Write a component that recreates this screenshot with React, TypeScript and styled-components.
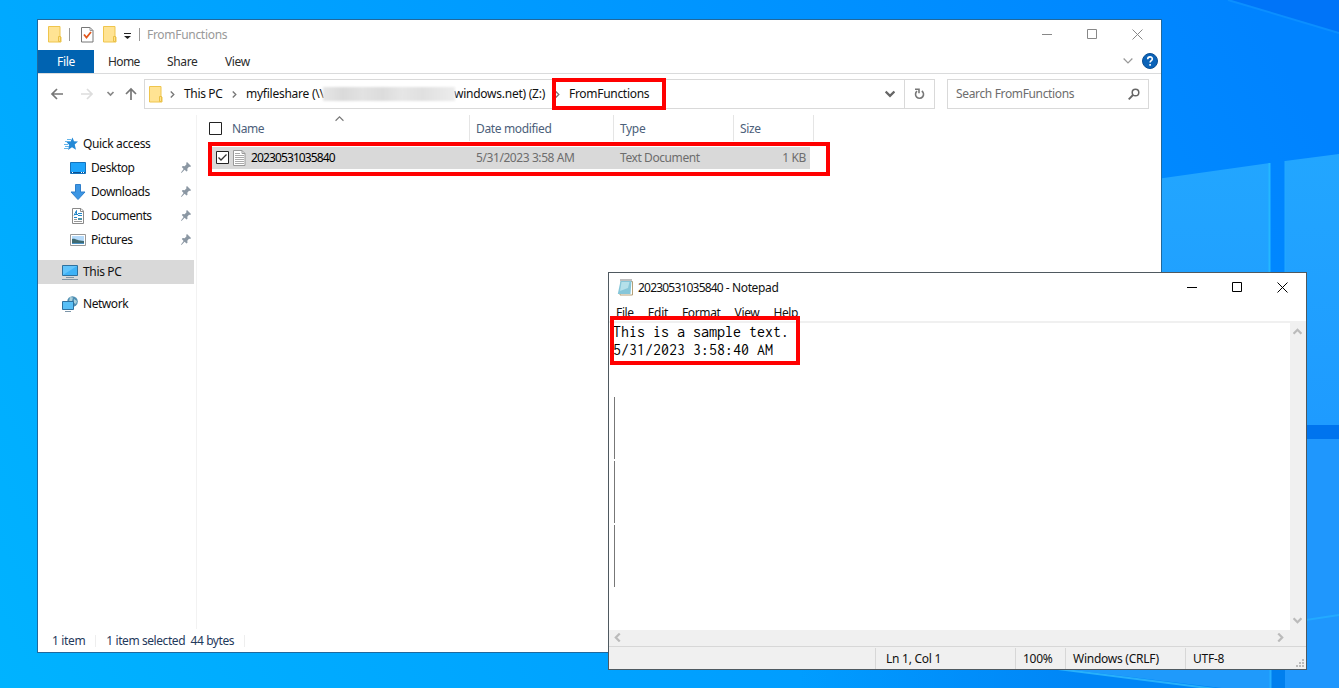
import React from 'react';
import styled, { createGlobalStyle } from 'styled-components';

const Global = createGlobalStyle`
  * { box-sizing: border-box; }
  body { margin: 0; overflow: hidden; }
  svg { display: block; flex: none; }
`;

const Desktop = styled.main`
  position: relative;
  width: 1339px;
  height: 688px;
  overflow: hidden;
  background: #0092ff;
  font: 12px/16px 'Noto Sans', 'Open Sans', sans-serif;
  letter-spacing: -0.35px;
  color: #111;
  white-space: pre;
`;

const Wallpaper = styled.svg`
  position: absolute;
  inset: 0;
`;

const Window = styled.section<{ $x: number; $y: number; $w: number; $h: number; $edge: string }>`
  position: absolute;
  left: ${p => p.$x}px;
  top: ${p => p.$y}px;
  width: ${p => p.$w}px;
  height: ${p => p.$h}px;
  border: 1px solid ${p => p.$edge};
  background: #fff;
  display: flex;
  flex-direction: column;
`;

const Highlight = styled.div<{ $x: number; $y: number; $w: number; $h: number }>`
  position: absolute;
  left: ${p => p.$x}px;
  top: ${p => p.$y}px;
  width: ${p => p.$w}px;
  height: ${p => p.$h}px;
  border: 4px solid #f00;
`;

const Label = styled.span<{ $track?: number; $color?: string }>`
  letter-spacing: ${p => p.$track ?? -0.35}px;
  color: ${p => p.$color ?? 'inherit'};
`;

/* File Explorer */
const TitleBar = styled.header`
  height: 30px;
  display: flex;
  align-items: center;
  padding: 0 0 1px 10px;
`;
const Separator = styled.i<{ $l: number; $r: number }>`
  width: 1px;
  height: 13px;
  margin: 0 ${p => p.$r}px 0 ${p => p.$l}px;
  background: #999;
`;
const QuickCheck = styled.svg`
  margin-right: 9px;
`;
const WindowButtons = styled.div`
  display: flex;
  gap: 35px;
  margin-left: auto;
  padding-right: 18px;
`;
const TabBar = styled.nav`
  height: 24px;
  display: flex;
  align-items: center;
  border-bottom: 1px solid #dadbdc;
  color: #2b2b2b;
`;
const FileTab = styled.span`
  width: 56px;
  height: 23px;
  line-height: 24px;
  text-align: center;
  background: #0063b1;
  color: #fff;
`;
const Tab = styled.span<{ $w: number }>`
  width: ${p => p.$w}px;
  padding-left: 14px;
`;
const HelpArea = styled.div`
  margin-left: auto;
  padding: 0 3px 1px 0;
  display: flex;
  align-items: center;
  gap: 9px;
`;
const NavRow = styled.div`
  height: 41px;
  display: flex;
  align-items: flex-start;
  padding: 5px 12px 0 11px;
`;
const NavButtons = styled.div`
  width: 95px;
  height: 30px;
  display: flex;
  align-items: center;
`;
const AddressBox = styled.div`
  width: 791px;
  height: 30px;
  border: 1px solid #d9d9d9;
  display: flex;
  align-items: center;
  padding-left: 4px;
`;
const Crumb = styled.span<{ $w: number }>`
  width: ${p => p.$w}px;
`;
const Redacted = styled.span`
  width: 132px;
  height: 14px;
  margin-right: -1px;
  background: linear-gradient(90deg, #e6e6e6, #dadada 15%, #e2e2e2 30%, #dcdcdc 45%, #e6e6e6 60%, #e0e0e0 75%, #ececec);
  filter: blur(1px);
`;
const DropArea = styled.span`
  margin-left: auto;
  width: 28px;
  display: flex;
  justify-content: center;
`;
const Refresh = styled.span`
  width: 30px;
  height: 28px;
  border-left: 1px solid #d9d9d9;
  display: flex;
  align-items: center;
  justify-content: center;
`;
const SearchBox = styled.div`
  width: 202px;
  height: 30px;
  margin-left: 12px;
  border: 1px solid #d9d9d9;
  padding: 0 8px;
  display: flex;
  align-items: center;
  justify-content: space-between;
  color: #6d6d6d;
`;
const Body = styled.div`
  height: 514px;
  display: flex;
`;
const Sidebar = styled.aside`
  width: 159px;
  border-right: 1px solid #f2f2f2;
  padding-top: 17px;
`;
const SideItem = styled.div<{ $pad: number; $gap?: number; $active?: boolean }>`
  width: 156px;
  height: 24px;
  margin-top: ${p => p.$gap ?? 0}px;
  padding: 0 3px 0 ${p => p.$pad}px;
  background: ${p => (p.$active ? '#d9d9d9' : 'transparent')};
  display: flex;
  align-items: center;
  gap: 5px;
  & > svg:nth-child(3) { margin: 0 0 1px auto; }
`;
const FileList = styled.div`
  flex: 1;
  padding-left: 11px;
`;
const ColumnHeads = styled.div`
  height: 26px;
  display: flex;
  color: #4c607a;
`;
const Column = styled.div<{ $w: number; $pad: number }>`
  position: relative;
  width: ${p => p.$w}px;
  padding: 1px 0 0 ${p => p.$pad}px;
  border-right: 1px solid #e5e5e5;
  display: flex;
  align-items: center;
  gap: 10px;
`;
const SortMark = styled.span`
  position: absolute;
  left: 127px;
  top: -1px;
`;
const FileRow = styled.div`
  width: 599px;
  height: 22px;
  margin: 6px 0 0 3px;
  padding: 0 4px 1px 5px;
  background: #d9d9d9;
  color: #6d6d6d;
  display: flex;
  align-items: center;
`;
const FileIcon = styled.span`
  padding: 0 5px 0 4px;
`;
const Cell = styled.span<{ $w: number }>`
  width: ${p => p.$w}px;
  letter-spacing: -0.42px;
`;
const SizeCell = styled.span`
  margin-left: auto;
`;
const StatusBar = styled.footer`
  flex: 1;
  display: flex;
  align-items: center;
  padding-left: 14px;
  color: #1f3a5c;
`;
const StatusRule = styled.i<{ $l: number; $r: number }>`
  width: 1px;
  height: 12px;
  margin: 0 ${p => p.$r}px 0 ${p => p.$l}px;
  background: #eee;
`;

/* Notepad */
const NoteTitle = styled.header`
  height: 30px;
  display: flex;
  align-items: center;
  padding: 0 0 1px 8px;
  gap: 5px;
`;
const MenuBar = styled.nav`
  height: 20px;
  display: flex;
  padding: 2px 0 0 7px;
  gap: 14px;
  border-bottom: 2px solid #f0f0f0;
`;
const Editor = styled.div`
  height: 307px;
  display: flex;
`;
const Page = styled.div`
  flex: 1;
  padding: 0 4px;
  font: 16px/18px Inconsolata, Consolas, 'DejaVu Sans Mono', monospace;
  letter-spacing: 0;
  color: #000;
`;
const Line = styled.div`
  height: 18px;
`;
const CaretTrail = styled.div`
  margin: 38px 0 0 1px;
  display: grid;
  gap: 2px;
  & > i { width: 1px; height: 62px; background: #777; }
`;
const VScroll = styled.div`
  width: 16px;
  background: #f0f0f0;
  display: flex;
  flex-direction: column;
  align-items: center;
  justify-content: space-between;
  padding: 4px 1px 5px 0;
`;
const HScroll = styled.div`
  height: 16px;
  background: #f0f0f0;
  display: flex;
  justify-content: space-between;
  align-items: center;
  padding: 0 21px 1px 4px;
`;
const NoteStatus = styled.footer`
  flex: 1;
  border-top: 1px solid #d7d7d7;
  background: #f0f0f0;
  display: flex;
  justify-content: flex-end;
  align-items: center;
`;
const StatusCell = styled.span<{ $w: number; $pad: number }>`
  width: ${p => p.$w}px;
  height: 21px;
  padding-left: ${p => p.$pad}px;
  border-left: 1px solid #d7d7d7;
  line-height: 22px;
  letter-spacing: -0.25px;
`;
const Grip = styled.svg`
  position: absolute;
  right: 2px;
  bottom: 2px;
`;

const Folder = () => (
  <svg width="14" height="17" viewBox="0 0 14 17">
    <path d="M.5.5h11.500v10.500h1v5H.5z" fill="#ffe393" stroke="#efc54d" />
    <path d="M10.500 10.500h2v5h-2z" fill="#ffe08a" stroke="#e9c046" />
  </svg>
);
const Chevron = ({ d = 'right', s = 7, c = '#777', w = 1.5 }: { d?: string; s?: number; c?: string; w?: number }) => {
  const r: Record<string, number> = { right: 0, down: 90, left: 180, up: 270 };
  return (
    <svg width={s} height={s} viewBox="0 0 8 8">
      <path d="M2 0.5L5.5 4 2 7.5" fill="none" stroke={c} strokeWidth={w} transform={`rotate(${r[d]} 4 4)`} />
    </svg>
  );
};
const Pin = () => (
  <svg width="10" height="11" viewBox="0 0 10 11" fill="#8b97a3">
    <path d="M6 0l4 4-.8 1-1.200-.2L6.300 6.700l.2 2-1 .8L3.600 7.700.5 11 0 10.500 2.600 6.900.8 5l.9-1 2 .2 1.800-1.900L5.200 1z" />
  </svg>
);
const Star = () => (
  <svg width="14" height="14" viewBox="0 0 14 14">
    <path d="M8.500.5l1.500 3.800 4 .2-3.300 3 1.300 5.200-4-2.500-4 2.700 1.200-5L2.500 5l4-.5z" fill="#2489d6" />
    <path d="M3 2.500h4M1 4.500h5M0 7.500h4M1 9.500h4M0 11.500h4" stroke="#65b5ea" />
  </svg>
);
const DesktopIcon = () => (
  <svg width="16" height="12" viewBox="0 0 16 12">
    <path d="M.5.5h15v11H.5z" fill="#1ea4fb" stroke="#1573bd" />
    <path d="M1 10.500h14" stroke="#0a4f91" />
    <path d="M2 10.500h1M11 10.500h1M13 10.500h1" stroke="#fff" />
  </svg>
);
const DownloadIcon = () => (
  <svg width="16" height="16" viewBox="0 0 16 16"><path d="M5.500.5h5v7.500h4.500L8 15.500 1 8h4.500z" fill="#3c96e4" stroke="#2f7fcb" /></svg>
);
const DocumentIcon = () => (
  <svg width="16" height="16" viewBox="0 0 16 16">
    <path d="M2.500.5h8.500l2.500 2.500v12.500h-11z" fill="#fff" stroke="#8a8a8a" />
    <path d="M10.500.5v3h3" fill="none" stroke="#8a8a8a" />
    <path d="M4 7.500l2.500-5v4M4 6.500h4M8 5.500h4M4 9.500h3M8 7.500h4" stroke="#2588c9" fill="none" />
    <path d="M4 11.500h3M4 13.500h8" stroke="#999" />
    <path d="M8 10h4v2H8z" fill="#4d93a8" />
  </svg>
);
const PictureIcon = () => (
  <svg width="16" height="12" viewBox="0 0 16 12">
    <path d="M.5.5h15v11H.5z" fill="#fff" stroke="#999" />
    <path d="M2 2h12v8H2z" fill="#b5dafa" />
    <path d="M2 5c3-1 5 2 12 2v2H2z" fill="#3f6a72" />
    <path d="M2 9h12v1H2z" fill="#4c93c6" />
  </svg>
);
const PcIcon = () => (
  <svg width="16" height="15" viewBox="0 0 16 15">
    <path d="M.5.5h15v10H.5z" fill="#62c4fb" stroke="#2e719f" />
    <path d="M1 10L15 1v9z" fill="#3fb2f6" />
    <path d="M4 12.500h8M0 14.500h16" stroke="#8296a5" />
  </svg>
);
const NetworkIcon = () => (
  <svg width="16" height="16" viewBox="0 0 16 16">
    <circle cx="10.500" cy="5.500" r="5.300" fill="#4f8fb3" />
    <path d="M8 1l3 .5-1 3.500-3 1zM12 3l3 2-1 3-2-1z" fill="#a9cfdb" />
    <path d="M.5 5.500h11v8H.5z" fill="#58bff6" stroke="#2e719f" />
    <path d="M3 15.500h6" stroke="#7c95a8" />
  </svg>
);
const TextFile = () => (
  <svg width="13" height="16" viewBox="0 0 13 16">
    <path d="M.5.5H9l3 3v12H.5z" fill="#fff" stroke="#999" />
    <path d="M9 .5v3h3" fill="none" stroke="#999" />
    <path d="M2 5.500h9M2 7.500h9M2 9.500h9M2 11.500h9M2 13.500h9M2 3.500h5" stroke="#aaa" />
  </svg>
);
const NotepadIcon = () => (
  <svg width="16" height="17" viewBox="0 0 16 17">
    <path d="M4 2.500h11.500V16H3z" fill="#fff" stroke="#b3a078" />
    <path d="M3.500 2H14.500l-1 13H.8z" fill="#86c6d9" />
    <path d="M4.500 3h8l-1.500 6-8 3z" fill="#b5e0ea" />
    <path d="M3.500 1h11" stroke="#555" strokeWidth="1.500" strokeDasharray="1 1" />
  </svg>
);
const Check = ({ on }: { on?: boolean }) => (
  <svg width="13" height="13" viewBox="0 0 13 13">
    <path d="M.5.5h12v12H.5z" fill="#fff" stroke="#222" />
    {on && <path d="M2.500 6.500L5 9l5.500-5.500" fill="none" stroke="#333" strokeWidth="1.300" />}
  </svg>
);
const Controls = ({ c }: { c: string }) => (
  <WindowButtons>
    <svg width="10" height="11" viewBox="0 0 10 11"><path d="M0 5.500h10" stroke={c} /></svg>
    <svg width="10" height="11" viewBox="0 0 10 11"><path d="M.5.5h9v9h-9z" fill="none" stroke={c} /></svg>
    <svg width="11" height="11" viewBox="0 0 11 11"><path d="M.5.5l10 10M10.500.5l-10 10" stroke={c} /></svg>
  </WindowButtons>
);

const quickItems = [
  { name: 'Desktop', icon: <DesktopIcon /> },
  { name: 'Downloads', icon: <DownloadIcon /> },
  { name: 'Documents', icon: <DocumentIcon /> },
  { name: 'Pictures', icon: <PictureIcon /> },
];

const Explorer = () => (
  <Window $x={37} $y={19} $w={1125} $h={634} $edge="#21689c">
    <TitleBar>
      <Folder />
      <Separator $l={7} $r={11} />
      <QuickCheck width="13" height="17" viewBox="0 0 13 17">
        <path d="M.5 1.500H9l3 3v11.500H.5z" fill="#fff" stroke="#777" />
        <path d="M9 1.500v3h3" fill="none" stroke="#999" />
        <path d="M3 8.500l2.500 3L10 6" fill="none" stroke="#e2571c" strokeWidth="1.800" />
      </QuickCheck>
      <Folder />
      <svg width="22" height="8" viewBox="0 0 22 8"><path d="M7 2.500h7" stroke="#222" /><path d="M7 5h7l-3.500 3z" fill="#222" /></svg>
      <Separator $l={0} $r={7} />
      <Label $track={-0.3} $color="#999">FromFunctions</Label>
      <Controls c="#888" />
    </TitleBar>
    <TabBar>
      <FileTab>File</FileTab>
      <Tab $w={59}><Label $track={-0.6}>Home</Label></Tab>
      <Tab $w={58}>Share</Tab>
      <Tab $w={60}>View</Tab>
      <HelpArea>
        <Chevron d="down" s={10} c="#999" w={1} />
        <svg width="16" height="16" viewBox="0 0 16 16">
          <circle cx="8" cy="8" r="7.500" fill="#0b63b8" stroke="#0a4e93" />
          <path d="M5.700 6.200C5.700 3 10.400 3.200 10.300 6c0 1.800-2.200 1.600-2.200 3.600M8.100 11v1.700" fill="none" stroke="#fff" strokeWidth="1.600" />
        </svg>
      </HelpArea>
    </TabBar>
    <NavRow>
      <NavButtons>
        <svg width="95" height="30" viewBox="0 0 95 30" fill="none" strokeWidth="1.700">
          <path d="M14 15H3M8 10l-5 5 5 5" stroke="#777" />
          <path d="M32 15h11M38 10l5 5-5 5" stroke="#ddd" />
          <path d="M58.500 13l3 3 3-3" stroke="#888" />
          <path d="M82 21V10M77 15l5-5 5 5" stroke="#777" />
        </svg>
      </NavButtons>
      <AddressBox>
        <Crumb $w={20}><Folder /></Crumb>
        <Crumb $w={15}><Chevron /></Crumb>
        <Crumb $w={47}>This PC</Crumb>
        <Crumb $w={15}><Chevron /></Crumb>
        <Crumb $w={77}><Label $track={-0.25}>myfileshare (\\</Label></Crumb>
        <Redacted />
        <Crumb $w={100}><Label $track={-0.25}>windows.net) (Z:)</Label></Crumb>
        <Crumb $w={15}><Chevron /></Crumb>
        <Label $track={-0.3}>FromFunctions</Label>
        <DropArea><Chevron d="down" s={10} c="#666" w={1.8} /></DropArea>
        <Refresh>
          <svg width="11" height="12" viewBox="0 0 11 12" fill="none" stroke="#777" strokeWidth="1.600">
            <path d="M7.800 3A4 4 0 1 1 3 3.200M1 1.300h4v4" />
          </svg>
        </Refresh>
      </AddressBox>
      <SearchBox>
        <Label>Search FromFunctions</Label>
        <svg width="12" height="12" viewBox="0 0 12 12" fill="none" stroke="#666" strokeWidth="1.500">
          <circle cx="7.500" cy="4.500" r="3.300" /><path d="M5 7L.7 11.300" strokeWidth="1.800" />
        </svg>
      </SearchBox>
    </NavRow>
    <Body>
      <Sidebar>
        <SideItem $pad={26}><Star /><Label>Quick access</Label></SideItem>
        {quickItems.map(q => (
          <SideItem key={q.name} $pad={32}>{q.icon}<Label $track={-0.45}>{q.name}</Label><Pin /></SideItem>
        ))}
        <SideItem $pad={24} $gap={8} $active><PcIcon /><span>This PC</span></SideItem>
        <SideItem $pad={24} $gap={8}><NetworkIcon /><Label $track={-0.45}>Network</Label></SideItem>
      </Sidebar>
      <FileList>
        <ColumnHeads>
          <Column $w={262} $pad={1}><Check /><Label $track={-0.45}>Name</Label><SortMark><Chevron d="up" s={9} w={1} /></SortMark></Column>
          <Column $w={144} $pad={6}>Date modified</Column>
          <Column $w={120} $pad={6}>Type</Column>
          <Column $w={80} $pad={6}>Size</Column>
        </ColumnHeads>
        <FileRow>
          <Check on />
          <FileIcon><TextFile /></FileIcon>
          <Cell $w={225}><Label $track={-0.88} $color="#000">20230531035840</Label></Cell>
          <Cell $w={144}>5/31/2023 3:58 AM</Cell>
          <Cell $w={120}>Text Document</Cell>
          <SizeCell>1 KB</SizeCell>
        </FileRow>
      </FileList>
    </Body>
    <StatusBar>
      <Label>1 item</Label>
      <StatusRule $l={10} $r={10} />
      <Label $track={-0.42}>1 item selected  44 bytes</Label>
      <StatusRule $l={10} $r={0} />
    </StatusBar>
  </Window>
);

const Notepad = () => (
  <Window $x={608} $y={272} $w={699} $h={398} $edge="#4f5960">
    <NoteTitle>
      <NotepadIcon />
      <span><Label $track={-0.8}>20230531035840</Label> - Notepad</span>
      <Controls c="#000" />
    </NoteTitle>
    <MenuBar>
      <span>File</span><span>Edit</span><span>Format</span><span>View</span><span>Help</span>
    </MenuBar>
    <Editor>
      <Page>
        <Line>This is a sample text.</Line>
        <Line>5/31/2023 3:58:40 AM</Line>
        <CaretTrail><i /><i /><i /></CaretTrail>
      </Page>
      <VScroll><Chevron d="up" s={9} c="#bbb" w={2} /><Chevron d="down" s={9} c="#bbb" w={2} /></VScroll>
    </Editor>
    <HScroll><Chevron d="left" s={9} c="#bbb" w={2} /><Chevron s={9} c="#bbb" w={2} /></HScroll>
    <NoteStatus>
      <StatusCell $w={140} $pad={10}>Ln 1, Col 1</StatusCell>
      <StatusCell $w={50} $pad={7}>100%</StatusCell>
      <StatusCell $w={120} $pad={7}>Windows (CRLF)</StatusCell>
      <StatusCell $w={121} $pad={7}>UTF-8</StatusCell>
    </NoteStatus>
    <Grip width="8" height="8" viewBox="0 0 8 8" fill="#bbb">
      <path d="M6 0h2v2H6zM3 3h2v2H3zM6 3h2v2H6zM0 6h2v2H0zM3 6h2v2H3zM6 6h2v2H6z" />
    </Grip>
  </Window>
);

export default function App() {
  return (
    <>
      <Global />
      <Desktop>
        <Wallpaper width="1339" height="688" viewBox="0 0 1339 688">
          <defs>
            <linearGradient id="sky" gradientUnits="userSpaceOnUse" x1="0" y1="688" x2="1250" y2="0">
              <stop offset="0" stopColor="#00b3ff" />
              <stop offset=".3" stopColor="#00a6ff" />
              <stop offset=".6" stopColor="#0098ff" />
              <stop offset="1" stopColor="#0083ff" />
            </linearGradient>
            <linearGradient id="floor" gradientUnits="userSpaceOnUse" x1="800" y1="0" x2="1080" y2="0">
              <stop offset="0" stopColor="#0089f8" stopOpacity="0" />
              <stop offset="1" stopColor="#0086f6" />
            </linearGradient>
            <linearGradient id="pane" x1="0" y1="0" x2="0" y2="1">
              <stop offset="0" stopColor="#22a6ff" />
              <stop offset="1" stopColor="#1e9bff" />
            </linearGradient>
          </defs>
          <path d="M0 0h1339v688H0z" fill="url(#sky)" />
          <path d="M1228 0h111v33z" fill="#0074f8" />
          <path d="M1228 0l111 33" stroke="#0b8fff" strokeWidth="2" />
          <path d="M1100 187L1270 163V425H1100zM1285 161L1339 154V425H1285z" fill="url(#pane)" />
          <path d="M1269.500 163v262" stroke="#25b8ff" strokeWidth="2" />
          <path d="M1285 161v264" stroke="#22a9ff" />
          <path d="M1306 425h33v14h-33z" fill="#0074ee" />
          <path d="M800 660h471v28H800z" fill="url(#floor)" />
          <path d="M1271 439h14v249h-14z" fill="#007fee" />
          <path d="M1040 666h231v28z" fill="#1f9afb" />
          <path d="M1050 668l221 28" stroke="#28b0fb" strokeWidth="2" />
          <path d="M1285 439h54v249h-54z" fill="#1f97fd" />
          <path d="M1270.500 660v28" stroke="#25aeff" strokeWidth="2" />
          <path d="M1306 620l33-5" stroke="#23aaff" strokeWidth="2" />
        </Wallpaper>
        <Explorer />
        <Highlight $x={552} $y={78} $w={114} $h={32} />
        <Highlight $x={208} $y={142} $w={622} $h={34} />
        <Notepad />
        <Highlight $x={610} $y={316} $w={190} $h={49} />
      </Desktop>
    </>
  );
}
